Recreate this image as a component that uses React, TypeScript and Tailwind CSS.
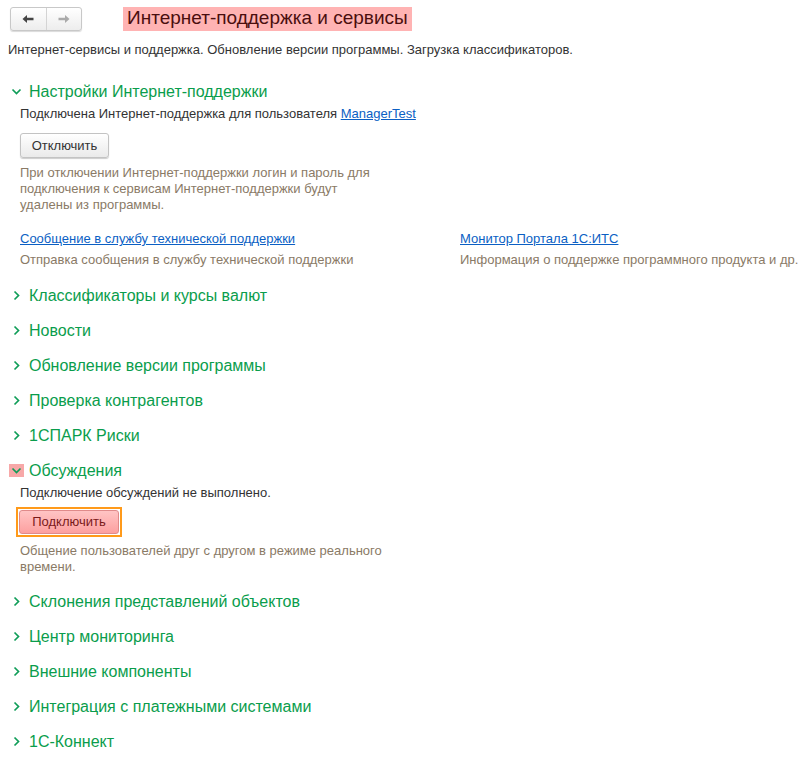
import React from "react";

const font = { fontFamily: '"Liberation Sans", Arial, sans-serif' };

function Chevron({ open, hl }: { open?: boolean; hl?: boolean }) {
  return (
    <span className={`flex h-[13px] w-[15px] items-center justify-center ${hl ? "bg-[#f7a8a8]" : ""}`}>
      <svg width="11" height="11" viewBox="0 0 11 11" fill="none" stroke="#0f9d58" strokeWidth="1.7">
        {open ? <path d="M1.5 3.5 L5.5 7.5 L9.5 3.5" /> : <path d="M3.5 1.5 L7.5 5.5 L3.5 9.5" />}
      </svg>
    </span>
  );
}

function Header({ title, open, hl }: { title: string; open?: boolean; hl?: boolean }) {
  return (
    <div className="flex h-[35px] items-center gap-[5px] pl-[9px]">
      <Chevron open={open} hl={hl} />
      <span className="text-[16px] text-[#0a9d4c]">{title}</span>
    </div>
  );
}

const collapsed1 = ["Классификаторы и курсы валют", "Новости", "Обновление версии программы", "Проверка контрагентов", "1СПАРК Риски"];
const collapsed2 = ["Склонения представлений объектов", "Центр мониторинга", "Внешние компоненты", "Интеграция с платежными системами", "1С-Коннект"];

export default function App() {
  return (
    <div style={font} className="min-h-[759px] w-[806px] bg-white text-[13px] text-[#333]">
      <div className="flex h-[36px] items-center pl-[10px] pt-[1px]">
        <div className="flex h-[24px] w-[72px] rounded-[3px] border border-[#c8c8c8] bg-gradient-to-b from-white to-[#ededed] shadow-[0_1px_1px_rgba(0,0,0,0.15)]">
          <div className="flex flex-1 items-center justify-center border-r border-[#d4d4d4]">
            <svg width="12" height="10" viewBox="0 0 12 10"><path d="M0.5 5 L5 1 L5 3.8 L11.5 3.8 L11.5 6.2 L5 6.2 L5 9 Z" fill="#444" /></svg>
          </div>
          <div className="flex flex-1 items-center justify-center">
            <svg width="12" height="10" viewBox="0 0 12 10"><path d="M11.5 5 L7 1 L7 3.8 L0.5 3.8 L0.5 6.2 L7 6.2 L7 9 Z" fill="#aaa" /></svg>
          </div>
        </div>
        <div className="ml-[41px] flex h-[24px] items-center bg-[#ffb3b3] px-[4px] text-[19px] text-[#4a0e0e]">
          Интернет-поддержка и сервисы
        </div>
      </div>
      <div className="pl-[8px] pt-[6px] leading-[16px]">
        Интернет-сервисы и поддержка. Обновление версии программы. Загрузка классификаторов.
      </div>
      <div className="mt-[16px]">
        <Header title="Настройки Интернет-поддержки" open />
        <div className="pl-[20px]">
          <div className="-mt-[3px] leading-[16px]">
            Подключена Интернет-поддержка для пользователя <span className="text-[#0b5fc4] underline">ManagerTest</span>
          </div>
          <button className="mt-[11px] h-[25px] w-[89px] rounded-[3px] border border-[#c3c3c3] bg-gradient-to-b from-white to-[#eaeaea] text-[13px] text-[#333] shadow-[0_1px_1px_rgba(0,0,0,0.2)]">
            Отключить
          </button>
          <div className="mt-[7px] w-[360px] leading-[16px] text-[#8a7a66]">
            При отключении Интернет-поддержки логин и пароль для подключения к сервисам Интернет-поддержки будут удалены из программы.
          </div>
          <div className="mt-[18px] grid grid-cols-[440px_1fr] leading-[16px]">
            <div>
              <div className="text-[#0b5fc4] underline">Сообщение в службу технической поддержки</div>
              <div className="mt-[5px] text-[#8a7a66]">Отправка сообщения в службу технической поддержки</div>
            </div>
            <div>
              <div className="text-[#0b5fc4] underline">Монитор Портала 1С:ИТС</div>
              <div className="mt-[5px] text-[#8a7a66]">Информация о поддержке программного продукта и др.</div>
            </div>
          </div>
        </div>
      </div>
      <div className="mt-[10px]">
        {collapsed1.map((t) => (
          <Header key={t} title={t} />
        ))}
        <Header title="Обсуждения" open hl />
        <div className="pl-[20px]">
          <div className="-mt-[3px] leading-[16px]">Подключение обсуждений не выполнено.</div>
          <div className="-ml-[4px] mt-[6px] inline-block border-2 border-[#ff9a1a] p-[1px]">
            <button className="h-[24px] w-[100px] rounded-[3px] border border-[#e08a8a] bg-gradient-to-b from-[#ffc4c4] to-[#fca0a0] text-[13px] text-[#7a1a1a]">
              Подключить
            </button>
          </div>
          <div className="mt-[6px] w-[380px] leading-[16px] text-[#8a7a66]">
            Общение пользователей друг с другом в режиме реального времени.
          </div>
        </div>
      </div>
      <div className="mt-[9px]">
        {collapsed2.map((t) => (
          <Header key={t} title={t} />
        ))}
      </div>
    </div>
  );
}
